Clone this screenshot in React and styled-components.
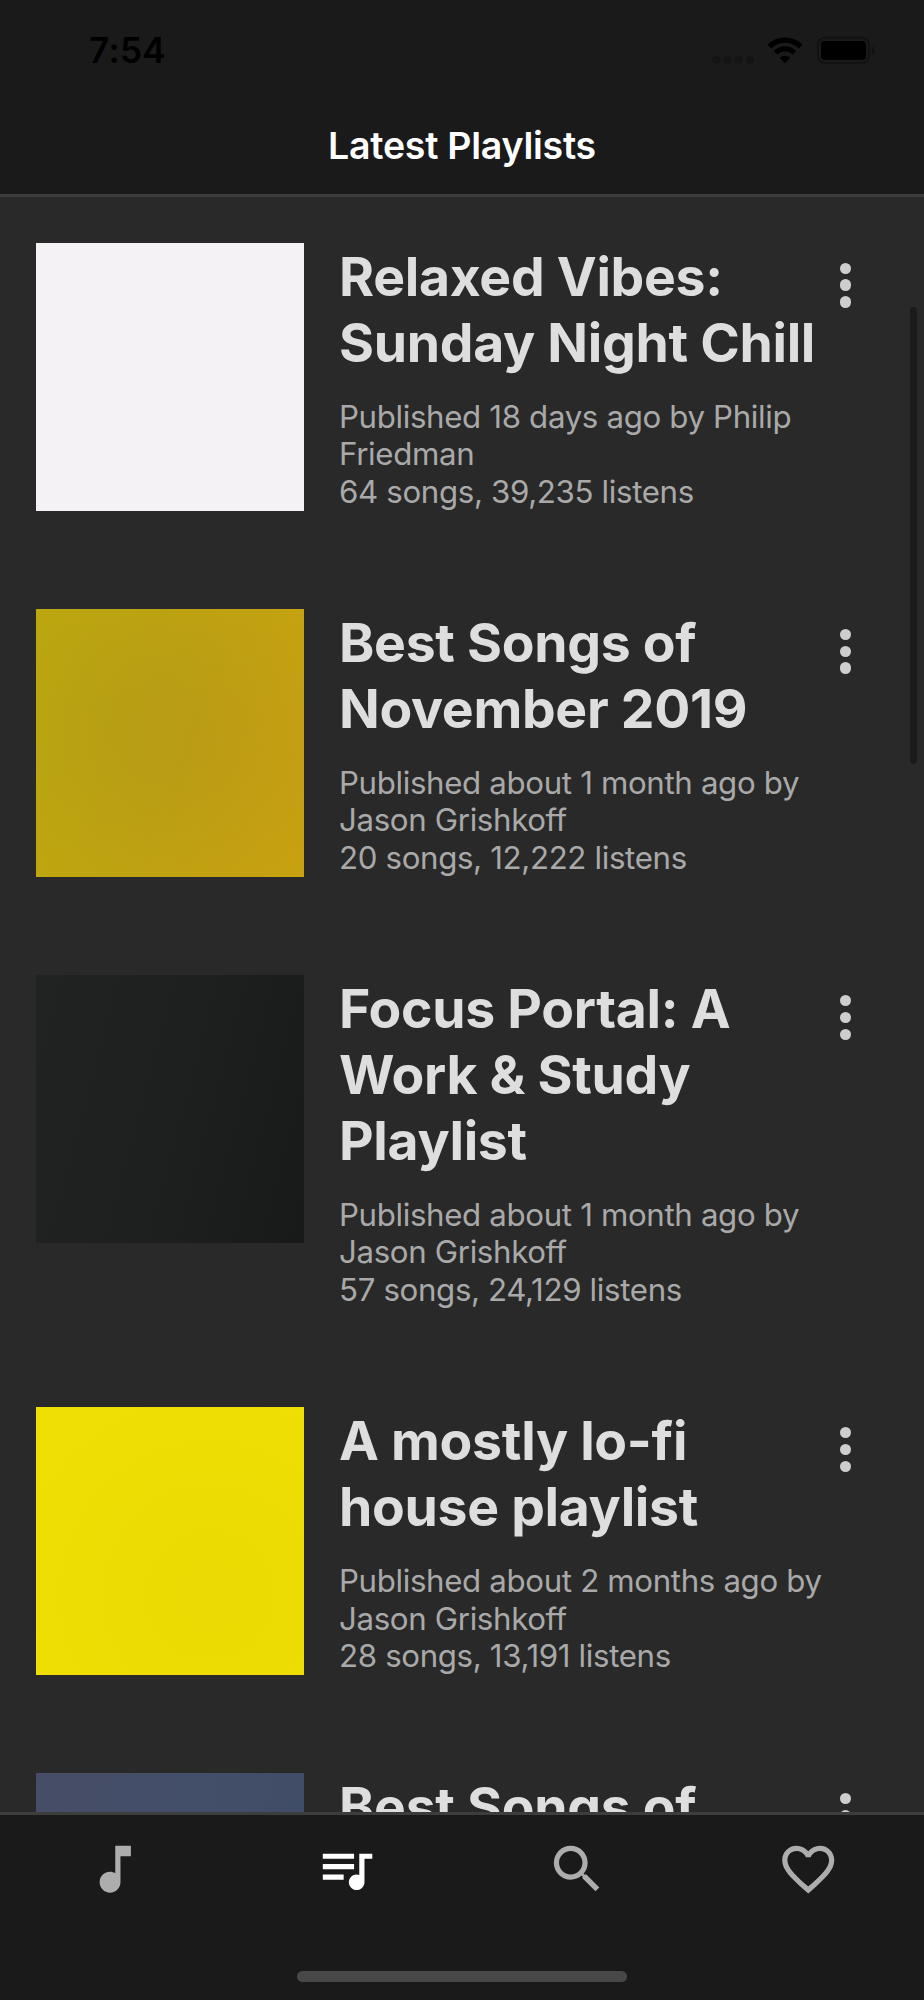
import React from 'react';
import styled, { createGlobalStyle } from 'styled-components';
import { MdMusicNote, MdQueueMusic, MdSearch, MdFavoriteBorder } from 'react-icons/md';


const GlobalStyle = createGlobalStyle`
	* {
		box-sizing: border-box;
	}
	body {
		margin: 0;
		background: #292929;
		font-family: Inter, "Liberation Sans", sans-serif;
	}
`
const Screen = styled.div`
	position: relative;
	display: flex;
	flex-direction: column;
	width: 924px;
	height: 2000px;
	overflow: hidden;
	background: #292929;
`
const Header = styled.header`
	flex: none;
	height: 197px;
	background: #1a1a1a;
	border-bottom: 3px solid #3d3d3d;
`
const StatusBar = styled.div`
	display: flex;
	justify-content: space-between;
	height: 98px;
	padding: 0 48px 0 89px;
`
const Clock = styled.div`
	padding-top: 29px;
	line-height: 43px;
	font-size: 35px;
	font-weight: 600;
	letter-spacing: 0.4px;
	color: #000;
`
const StatusIcons = styled.svg`
	margin-top: 32px;
	width: 164px;
	height: 36px;
`
const HeaderTitle = styled.h1`
	margin: 0;
	height: 96px;
	line-height: 96px;
	text-align: center;
	font-size: 37.5px;
	font-weight: 600;
	letter-spacing: -0.25px;
	color: #fff;
`
const List = styled.main`
	flex: 1;
	min-height: 0;
	overflow: hidden;
	padding: 46px 36px 0;
`
const Row = styled.article`
	display: flex;
	align-items: flex-start;
	margin-bottom: 97.5px;
`
const Cover = styled.div`
	flex: none;
	width: 268px;
	height: 268px;
	background: ${props => props.$fill};
`
const Info = styled.div`
	width: 486px;
	margin-left: 35px;
	padding-top: 1px;
`
const Title = styled.h2`
	margin: 0 0 22.5px;
	font-size: 53.5px;
	line-height: 66px;
	font-weight: 700;
	letter-spacing: -0.3px;
	color: #dedede;
`
const Detail = styled.p`
	margin: 0;
	font-size: 31.25px;
	line-height: 37.7px;
	letter-spacing: -0.35px;
	color: #a9a9a9;
`
const MoreButton = styled.button`
	display: flex;
	flex-direction: column;
	gap: 5.6px;
	margin: 19.5px 0 0 15px;
	padding: 0;
	border: 0;
	background: none;
`
const Dot = styled.span`
	width: 11.3px;
	height: 11.3px;
	border-radius: 50%;
	background: #cecece;
`
const ScrollThumb = styled.div`
	position: absolute;
	top: 307px;
	right: 7px;
	width: 7px;
	height: 457px;
	border-radius: 4px;
	background: #1b1b1b;
`
const TabBar = styled.footer`
	flex: none;
	display: flex;
	flex-direction: column;
	align-items: center;
	height: 188px;
	padding-bottom: 18px;
	background: #1a1a1a;
	border-top: 3px solid #3d3d3d;
`
const Tabs = styled.nav`
	flex: 1;
	display: grid;
	grid-template-columns: repeat(4, 1fr);
	align-items: start;
	width: 100%;
	padding-top: 22.5px;
`
const Tab = styled.a`
	display: flex;
	justify-content: center;
	font-size: 62.5px;
	color: ${props => props.$active ? "#fff" : "#adadad"};
`
const HomeIndicator = styled.div`
	width: 330px;
	height: 11px;
	border-radius: 6px;
	background: #484848;
`

const playlists = [
	{
		id: 1,
		title: "Relaxed Vibes: Sunday Night Chill",
		published: "Published 18 days ago by Philip Friedman",
		stats: "64 songs, 39,235 listens",
		fill: "#f4f2f4",
	},
	{
		id: 2,
		title: "Best Songs of November 2019",
		published: "Published about 1 month ago by Jason Grishkoff",
		stats: "20 songs, 12,222 listens",
		fill: "radial-gradient(circle at 45% 45%, rgba(208,178,10,0) 20%, rgba(208,178,10,0.4)), linear-gradient(105deg, #b3a212, #b99d14 50%, #c39715)",
	},
	{
		id: 3,
		title: "Focus Portal: A Work & Study Playlist",
		published: "Published about 1 month ago by Jason Grishkoff",
		stats: "57 songs, 24,129 listens",
		fill: "linear-gradient(105deg, #212322, #1e201f 50%, #181a19)",
	},
	{
		id: 4,
		title: "A mostly lo-fi house playlist",
		published: "Published about 2 months ago by Jason Grishkoff",
		stats: "28 songs, 13,191 listens",
		fill: "radial-gradient(circle at 65% 70%, #ebda03, #f0df03 85%)",
	},
	{
		id: 5,
		title: "Best Songs of",
		fill: "linear-gradient(100deg, #474d66, #434e68 50%, #404d66)",
	},
]

const tabs = [
	{ name: "Songs", icon: MdMusicNote },
	{ name: "Playlists", icon: MdQueueMusic, active: true },
	{ name: "Search", icon: MdSearch },
	{ name: "Favorites", icon: MdFavoriteBorder },
]

const Playlist = ({ title, published, stats, fill }) => (
	<Row>
		<Cover $fill={fill}/>
		<Info>
			<Title>{title}</Title>
			{published && <Detail>{published}</Detail>}
			{stats && <Detail>{stats}</Detail>}
		</Info>
		<MoreButton aria-label="More">
			<Dot/>
			<Dot/>
			<Dot/>
		</MoreButton>
	</Row>
)

const PhoneStatus = () => (
	<StatusIcons viewBox="712 32 164 36">
		<g fill="#141414">
			<circle cx="716.3" cy="59.7" r="3.9"/>
			<circle cx="727.6" cy="59.7" r="3.9"/>
			<circle cx="738.6" cy="59.7" r="3.9"/>
			<circle cx="750" cy="59.7" r="3.9"/>
		</g>
		<g fill="none" stroke="#000" strokeWidth="5.4">
			<path d="M769.4 46.6A22 22 0 0 1 800.6 46.6"/>
			<path d="M775.6 52.8A13.2 13.2 0 0 1 794.4 52.8"/>
		</g>
		<path d="M779.7 57.8A7.6 7.6 0 0 1 790.3 57.8L785 63.3Z" fill="#000"/>
		<rect x="818" y="37.8" width="51" height="25" rx="6.5" fill="none" stroke="#121212" strokeWidth="2"/>
		<rect x="821" y="41" width="45" height="19" rx="3.8" fill="#000"/>
		<path d="M872.3 46.2A4.8 4.8 0 0 1 872.3 54.6Z" fill="#101010"/>
	</StatusIcons>
)

const App = () => (
	<Screen>
		<GlobalStyle/>
		<Header>
			<StatusBar>
				<Clock>7:54</Clock>
				<PhoneStatus/>
			</StatusBar>
			<HeaderTitle>Latest Playlists</HeaderTitle>
		</Header>
		<List>
			{playlists.map(playlist => <Playlist key={playlist.id} {...playlist}/>)}
		</List>
		<ScrollThumb/>
		<TabBar>
			<Tabs>
				{tabs.map(({ name, icon: Icon, active }) => (
					<Tab key={name} $active={active} aria-label={name}>
						<Icon/>
					</Tab>
				))}
			</Tabs>
			<HomeIndicator/>
		</TabBar>
	</Screen>
)

export default App;
